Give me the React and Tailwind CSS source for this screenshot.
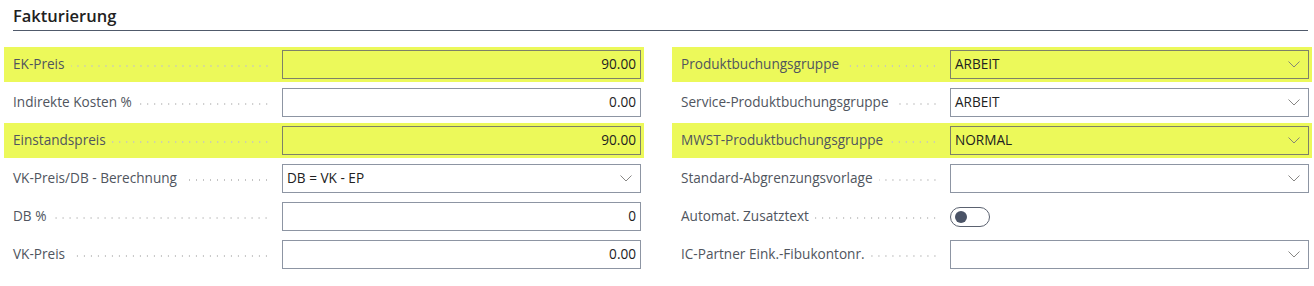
const left = [
  { label: 'EK-Preis', value: '90.00', hl: true, align: 'right' },
  { label: 'Indirekte Kosten %', value: '0.00', align: 'right' },
  { label: 'Einstandspreis', value: '90.00', hl: true, align: 'right' },
  { label: 'VK-Preis/DB - Berechnung', value: 'DB = VK - EP', select: true },
  { label: 'DB %', value: '0', align: 'right' },
  { label: 'VK-Preis', value: '0.00', align: 'right' },
];

const right = [
  { label: 'Produktbuchungsgruppe', value: 'ARBEIT', hl: true, select: true },
  { label: 'Service-Produktbuchungsgruppe', value: 'ARBEIT', select: true },
  { label: 'MWST-Produktbuchungsgruppe', value: 'NORMAL', hl: true, select: true },
  { label: 'Standard-Abgrenzungsvorlage', value: '', select: true },
  { label: 'Automat. Zusatztext', toggle: true },
  { label: 'IC-Partner Eink.-Fibukontonr.', value: '', select: true },
];

const Chevron = () => (
  <svg width="12" height="7" viewBox="0 0 12 7" className="shrink-0">
    <polyline points="0.5,0.5 6,6 11.5,0.5" fill="none" stroke="#7a7977" strokeWidth="0.9" />
  </svg>
);

const Field = ({ f }) => (
  <div
    className={
      'flex items-center h-[35px] pl-[9px] pr-[3px] ' + (f.hl ? 'bg-[#ecf95a]' : 'bg-white')
    }
  >
    <div className="flex items-center w-[269px] shrink-0 pr-[12px]">
      <span className="text-[13.6px] text-[#50555e] whitespace-nowrap">{f.label}</span>
      <div className="flex-1 ml-[6px] mt-[3px] h-[2px] bg-[radial-gradient(circle,#c4c4c4_0.9px,transparent_1.1px)] bg-[length:7px_2px] bg-repeat-x bg-right" />
    </div>
    {f.toggle ? (
      <div className="flex-1 flex items-center">
        <div className="w-[40px] h-[20px] rounded-full border border-[#5b6270] flex items-center pl-[4px]">
          <div className="w-[12px] h-[12px] rounded-full bg-[#4a5366]" />
        </div>
      </div>
    ) : (
      <div
        className={
          'flex-1 h-[29px] border flex items-center px-[4px] text-[13.6px] text-[#212121] ' +
          (f.hl ? 'border-[#7e8168]' : 'border-[#8d95a3] bg-white') +
          (f.align === 'right' ? ' justify-end' : ' justify-between')
        }
      >
        <span>{f.value}</span>
        {f.select && (
          <span className="pr-[4px] flex items-center">
            <Chevron />
          </span>
        )}
      </div>
    )}
  </div>
);

export default function App() {
  return (
    <div className="w-[1314px] h-[286px] bg-white px-[4px] font-['Segoe_UI','Open_Sans',sans-serif]">
      <div className="pl-[9px] pr-[2px] pt-[5px]">
        <h2 className="text-[16.5px] font-semibold text-[#212121] leading-[22px] pb-[3px] border-b border-[#505a6b]">
          Fakturierung
        </h2>
      </div>
      <div className="grid grid-cols-[640px_640px] gap-x-[28px] mt-[16px]">
        <div className="flex flex-col gap-[3px]">
          {left.map((f) => (
            <Field key={f.label} f={f} />
          ))}
        </div>
        <div className="flex flex-col gap-[3px]">
          {right.map((f) => (
            <Field key={f.label} f={f} />
          ))}
        </div>
      </div>
    </div>
  );
}
